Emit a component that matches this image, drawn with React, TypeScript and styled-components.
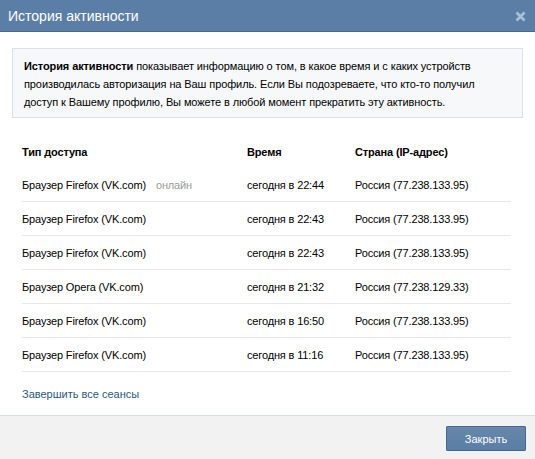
import React from "react";
import styled, { createGlobalStyle } from "styled-components";

const Global = createGlobalStyle`
  html, body { margin: 0; padding: 0; height: 100%; background: #fff; }
  #root { height: 100%; }
  body { font-family: "Liberation Sans", Arial, sans-serif; font-size: 11px; color: #000; }
`;

const Dialog = styled.div`
  display: flex;
  flex-direction: column;
  height: 459px;
  width: 535px;
  background: #fff;
`;

const TitleBar = styled.div`
  height: 31px;
  background: #5a7ea5;
  border-bottom: 1px solid #45688e;
  display: flex;
  align-items: center;
  justify-content: space-between;
  padding: 0 8px 0 8px;
  box-sizing: content-box;
`;

const Title = styled.div`
  color: #fff;
  font-size: 14px;
  line-height: 31px;
  padding-top: 1px;
`;

const CloseBtn = styled.div`
  width: 12px;
  height: 12px;
  display: flex;
  align-items: center;
  justify-content: center;
  margin-right: 1px;
  margin-top: 1px;
`;

const Body = styled.div`
  padding: 16px 12px 0 12px;
  display: flex;
  flex-direction: column;
`;

const InfoBox = styled.div`
  background: #f7f8fa;
  border: 1px solid #dbe0ea;
  padding: 8px 11px 8px 11px;
  line-height: 18px;
  height: 52px;
  letter-spacing: -0.1px;
`;

const Strong = styled.span`
  font-weight: bold;
`;

const Table = styled.div`
  margin: 16px 24px 0 22px;
  display: flex;
  flex-direction: column;
`;

const Row = styled.div<{ $head?: boolean }>`
  display: grid;
  grid-template-columns: 225px 108px 1fr;
  align-items: center;
  height: 33px;
  border-bottom: ${(p) => (p.$head ? "none" : "1px solid #e7e8ec")};
  font-weight: ${(p) => (p.$head ? "bold" : "normal")};
  padding-top: ${(p) => (p.$head ? "1px" : "0")};
  letter-spacing: -0.15px;
`;

const Online = styled.span`
  color: #9a9a9a;
  margin-left: 10px;
`;

const LinkRow = styled.div`
  height: 43px;
  display: flex;
  align-items: center;
  padding-left: 22px;
`;

const Link = styled.a`
  color: #2b587a;
  text-decoration: none;
  cursor: pointer;
`;

const Footer = styled.div`
  margin-top: auto;
  background: #f2f2f2;
  border-top: 1px solid #d8dde6;
  display: flex;
  justify-content: flex-end;
  align-items: flex-start;
  padding: 10px 9px 0 0;
  box-sizing: border-box;
  height: 44px;
`;

const Button = styled.button`
  width: 80px;
  height: 25px;
  border: 1px solid #45688e;
  border-radius: 1px;
  background: linear-gradient(#6787ab, #5a7ea5);
  color: #fff;
  font-family: "Liberation Sans", Arial, sans-serif;
  font-size: 11px;
  padding: 0;
  cursor: pointer;
`;

const rows = [
  { t: "Браузер Firefox (VK.com)", online: true, time: "сегодня в 22:44", ip: "Россия (77.238.133.95)" },
  { t: "Браузер Firefox (VK.com)", time: "сегодня в 22:43", ip: "Россия (77.238.133.95)" },
  { t: "Браузер Firefox (VK.com)", time: "сегодня в 22:43", ip: "Россия (77.238.133.95)" },
  { t: "Браузер Opera (VK.com)", time: "сегодня в 21:32", ip: "Россия (77.238.129.33)" },
  { t: "Браузер Firefox (VK.com)", time: "сегодня в 16:50", ip: "Россия (77.238.133.95)" },
  { t: "Браузер Firefox (VK.com)", time: "сегодня в 11:16", ip: "Россия (77.238.133.95)" },
];

export default function App() {
  return (
    <>
      <Global />
      <Dialog>
        <TitleBar>
          <Title>История активности</Title>
          <CloseBtn>
            <svg width="11" height="11" viewBox="0 0 11 11">
              <path d="M1.5 1.5 L9.5 9.5 M9.5 1.5 L1.5 9.5" stroke="#a9c0d9" strokeWidth="2.6" />
            </svg>
          </CloseBtn>
        </TitleBar>
        <Body>
          <InfoBox>
            <Strong>История активности</Strong> показывает информацию о том, в какое время и с каких устройств
            производилась авторизация на Ваш профиль. Если Вы подозреваете, что кто-то получил
            доступ к Вашему профилю, Вы можете в любой момент прекратить эту активность.
          </InfoBox>
        </Body>
        <Table>
          <Row $head>
            <div>Тип доступа</div>
            <div>Время</div>
            <div>Страна (IP-адрес)</div>
          </Row>
          {rows.map((r, i) => (
            <Row key={i}>
              <div>
                {r.t}
                {r.online && <Online>онлайн</Online>}
              </div>
              <div>{r.time}</div>
              <div>{r.ip}</div>
            </Row>
          ))}
        </Table>
        <LinkRow>
          <Link>Завершить все сеансы</Link>
        </LinkRow>
        <Footer>
          <Button>Закрыть</Button>
        </Footer>
      </Dialog>
    </>
  );
}
